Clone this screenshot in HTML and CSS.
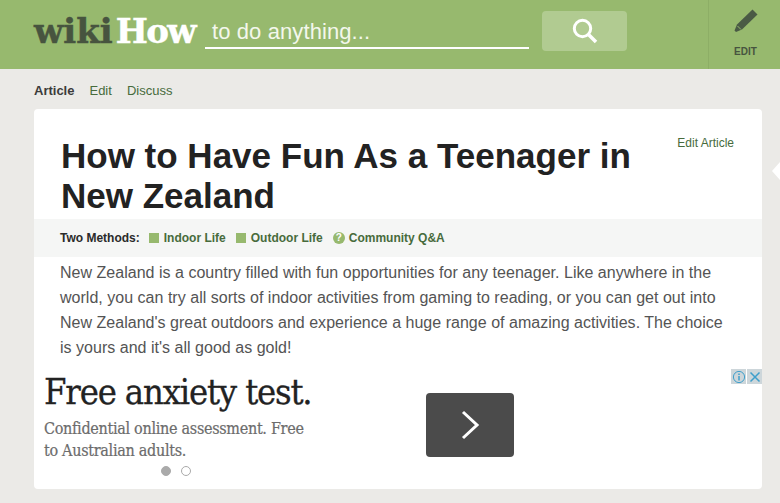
FILE: index.html
```html
<!DOCTYPE html>
<html lang="en">
<head>
    <meta charset="UTF-8">
    <title>How to Have Fun As a Teenager in New Zealand</title>
    <link rel="stylesheet" href="styles.css">
</head>
<body>
    <header class="header">
        <div class="logo"><span class="logo-wiki">wiki</span><span class="logo-how">How</span></div>
        <div class="search-input">to do anything...</div>
        <div class="search-button">
            <svg width="28" height="28" viewBox="0 0 28 28">
                <circle cx="11.5" cy="11.5" r="8.2" fill="none" stroke="#fff" stroke-width="3"/>
                <path d="M17.5 17.5L25 25" stroke="#fff" stroke-width="3.6"/>
            </svg>
        </div>
        <div class="header-edit">
            <svg width="26" height="26" viewBox="0 0 26 26">
                <path d="M19.5 1.5L24.5 6.5L9 21.5L3 24L1.5 22.5L4 16.5Z" fill="#4a5a45"/>
                <path d="M4.5 18L8 21.5" stroke="#97b96e" stroke-width="1"/>
            </svg>
            <span>EDIT</span>
        </div>
    </header>

    <nav class="tabs">
        <a class="tab tab-active">Article</a>
        <a class="tab">Edit</a>
        <a class="tab">Discuss</a>
    </nav>

    <main class="card">
        <div class="title-row">
            <h1>How to Have Fun As a Teenager in New Zealand</h1>
            <a class="edit-article">Edit Article</a>
        </div>
        <div class="methods">
            <strong class="methods-label">Two Methods:</strong>
            <a class="method"><i class="square"></i>Indoor Life</a>
            <a class="method"><i class="square"></i>Outdoor Life</a>
            <a class="method method-qa"><i class="qmark">?</i>Community Q&amp;A</a>
        </div>
        <p class="intro">New Zealand is a country filled with fun opportunities for any teenager. Like anywhere in the world, you can try all sorts of indoor activities from gaming to reading, or you can get out into New Zealand's great outdoors and experience a huge range of amazing activities. The choice is yours and it's all good as gold!</p>
        <section class="ad">
            <div class="ad-text">
                <h2>Free anxiety test.</h2>
                <p>Confidential online assessment. Free to Australian adults.</p>
                <div class="dots"><i class="dot dot-on"></i><i class="dot"></i></div>
            </div>
            <div class="ad-button">
                <svg width="20" height="30" viewBox="0 0 20 30">
                    <path d="M3 2L17 15L3 28" fill="none" stroke="#fff" stroke-width="3"/>
                </svg>
            </div>
            <div class="ad-icons">
                <span class="ad-icon">
                    <svg width="14" height="14" viewBox="0 0 14 14">
                        <circle cx="7" cy="7" r="5.6" fill="none" stroke="#3f9fcb" stroke-width="1"/>
                        <path d="M7 6v4.5M7 3.6v1.4" stroke="#3f9fcb" stroke-width="1.5"/>
                    </svg>
                </span>
                <span class="ad-icon">
                    <svg width="14" height="14" viewBox="0 0 14 14">
                        <path d="M2.5 2.5L11.5 11.5M11.5 2.5L2.5 11.5" stroke="#3f9fcb" stroke-width="1.5"/>
                    </svg>
                </span>
            </div>
        </section>
    </main>
    <i class="side-arrow"></i>
</body>
</html>
```

FILE: styles.css
```css
html, body {
    height: 503px;
    overflow: hidden;
}

body {
    margin: 0;
    background-color: #ebeae7;
    font-family: "Liberation Sans", Arial, sans-serif;
    position: relative;
}

.header {
    height: 69px;
    background-color: #97b96e;
    display: flex;
    align-items: flex-start;
    padding-left: 34px;
    box-sizing: border-box;
}

.logo {
    width: 171px;
    flex: none;
    margin-top: 11px;
    font-family: "DejaVu Serif", serif;
    font-weight: bold;
    font-size: 34px;
    line-height: 40px;
    white-space: nowrap;
    -webkit-text-stroke: 0.5px;
}

.logo-wiki {
    color: #47543f;
    margin-right: 3px;
}

.logo-how {
    color: #ffffff;
    letter-spacing: -1.6px;
}

.search-input {
    width: 324px;
    height: 38px;
    flex: none;
    margin-top: 11px;
    box-sizing: border-box;
    border-bottom: 2px solid #ffffff;
    padding-left: 7px;
    color: #f3f7ec;
    font-size: 22px;
    line-height: 41px;
    letter-spacing: 0.1px;
}

.search-button {
    width: 85px;
    height: 40px;
    flex: none;
    margin: 11px 0 0 13px;
    background-color: #b1cb91;
    border-radius: 4px;
    display: flex;
    justify-content: center;
    align-items: center;
}

.header-edit {
    width: 72px;
    height: 69px;
    margin-left: auto;
    border-left: 1px solid #8dae66;
    box-sizing: border-box;
    display: flex;
    flex-direction: column;
    align-items: center;
    padding: 8px 0 0 2px;
    color: #47543f;
    font-size: 10px;
    font-weight: bold;
    gap: 12px;
}

.tabs {
    height: 40px;
    padding: 2px 0 0 34px;
    box-sizing: border-box;
    display: flex;
    align-items: center;
    gap: 15px;
    font-size: 13px;
    color: #476b3c;
}

.tab-active {
    color: #3b3b3b;
    font-weight: bold;
}

.card {
    width: 728px;
    height: 380px;
    margin-left: 34px;
    background-color: #ffffff;
    border-radius: 4px;
    overflow: hidden;
}

.title-row {
    display: flex;
    justify-content: space-between;
    padding: 27px 28px 0 27px;
}

h1 {
    margin: 0;
    width: 600px;
    color: #222222;
    font-size: 35px;
    line-height: 40px;
    font-weight: bold;
}

.edit-article {
    font-size: 12px;
    line-height: 14px;
    color: #476b3c;
}

.methods {
    height: 38px;
    margin-top: 3px;
    padding-left: 26px;
    background-color: #f5f6f5;
    display: flex;
    align-items: center;
    gap: 10px;
    font-size: 12px;
    font-weight: bold;
    color: #2a2a2a;
}

.methods-label {
    margin-right: -1px;
}

.method {
    color: #476b3c;
    display: flex;
    align-items: center;
}

.square {
    width: 10px;
    height: 10px;
    margin-right: 5px;
    background-color: #97b96e;
}

.qmark {
    width: 12px;
    height: 12px;
    margin-right: 4px;
    border-radius: 50%;
    background-color: #97b96e;
    color: #ffffff;
    font-size: 10px;
    line-height: 12px;
    text-align: center;
    font-style: normal;
}

.intro {
    margin: 3px 30px 0 26px;
    color: #545454;
    font-size: 16px;
    line-height: 25px;
    letter-spacing: 0.02px;
}

.ad {
    position: relative;
    height: 120px;
    margin-top: 9px;
    display: flex;
    padding-left: 10px;
}

.ad-text {
    width: 382px;
    flex: none;
}

.ad-text h2 {
    margin: 2px 0 0;
    color: #222222;
    font-family: "DejaVu Serif Condensed", "DejaVu Serif", serif;
    font-weight: normal;
    font-size: 36px;
    line-height: 42px;
    letter-spacing: -1.15px;
    white-space: nowrap;
    -webkit-text-stroke: 0.3px;
}

.ad-text p {
    margin: 5px 0 0;
    width: 275px;
    color: #6c6c6c;
    font-family: "DejaVu Serif Condensed", "DejaVu Serif", serif;
    font-size: 16px;
    line-height: 22px;
    letter-spacing: -0.3px;
    -webkit-text-stroke: 0.2px;
}

.dots {
    display: flex;
    justify-content: center;
    gap: 10px;
    margin-top: 4px;
    width: 264px;
}

.dot {
    width: 8px;
    height: 8px;
    border: 1px solid #aaaaaa;
    border-radius: 50%;
}

.dot-on {
    background-color: #aaaaaa;
}

.ad-button {
    width: 88px;
    height: 64px;
    margin-top: 24px;
    background-color: #4b4b4b;
    border-radius: 4px;
    display: flex;
    justify-content: center;
    align-items: center;
}

.ad-icons {
    position: absolute;
    top: 0;
    right: 0;
    display: flex;
    gap: 1px;
}

.ad-icon {
    width: 15px;
    height: 15px;
    background-color: #cdd6da;
    display: flex;
    justify-content: center;
    align-items: center;
}

.side-arrow {
    position: absolute;
    left: 772px;
    top: 162px;
    border-top: 9px solid transparent;
    border-bottom: 9px solid transparent;
    border-right: 8px solid #ffffff;
}
```
